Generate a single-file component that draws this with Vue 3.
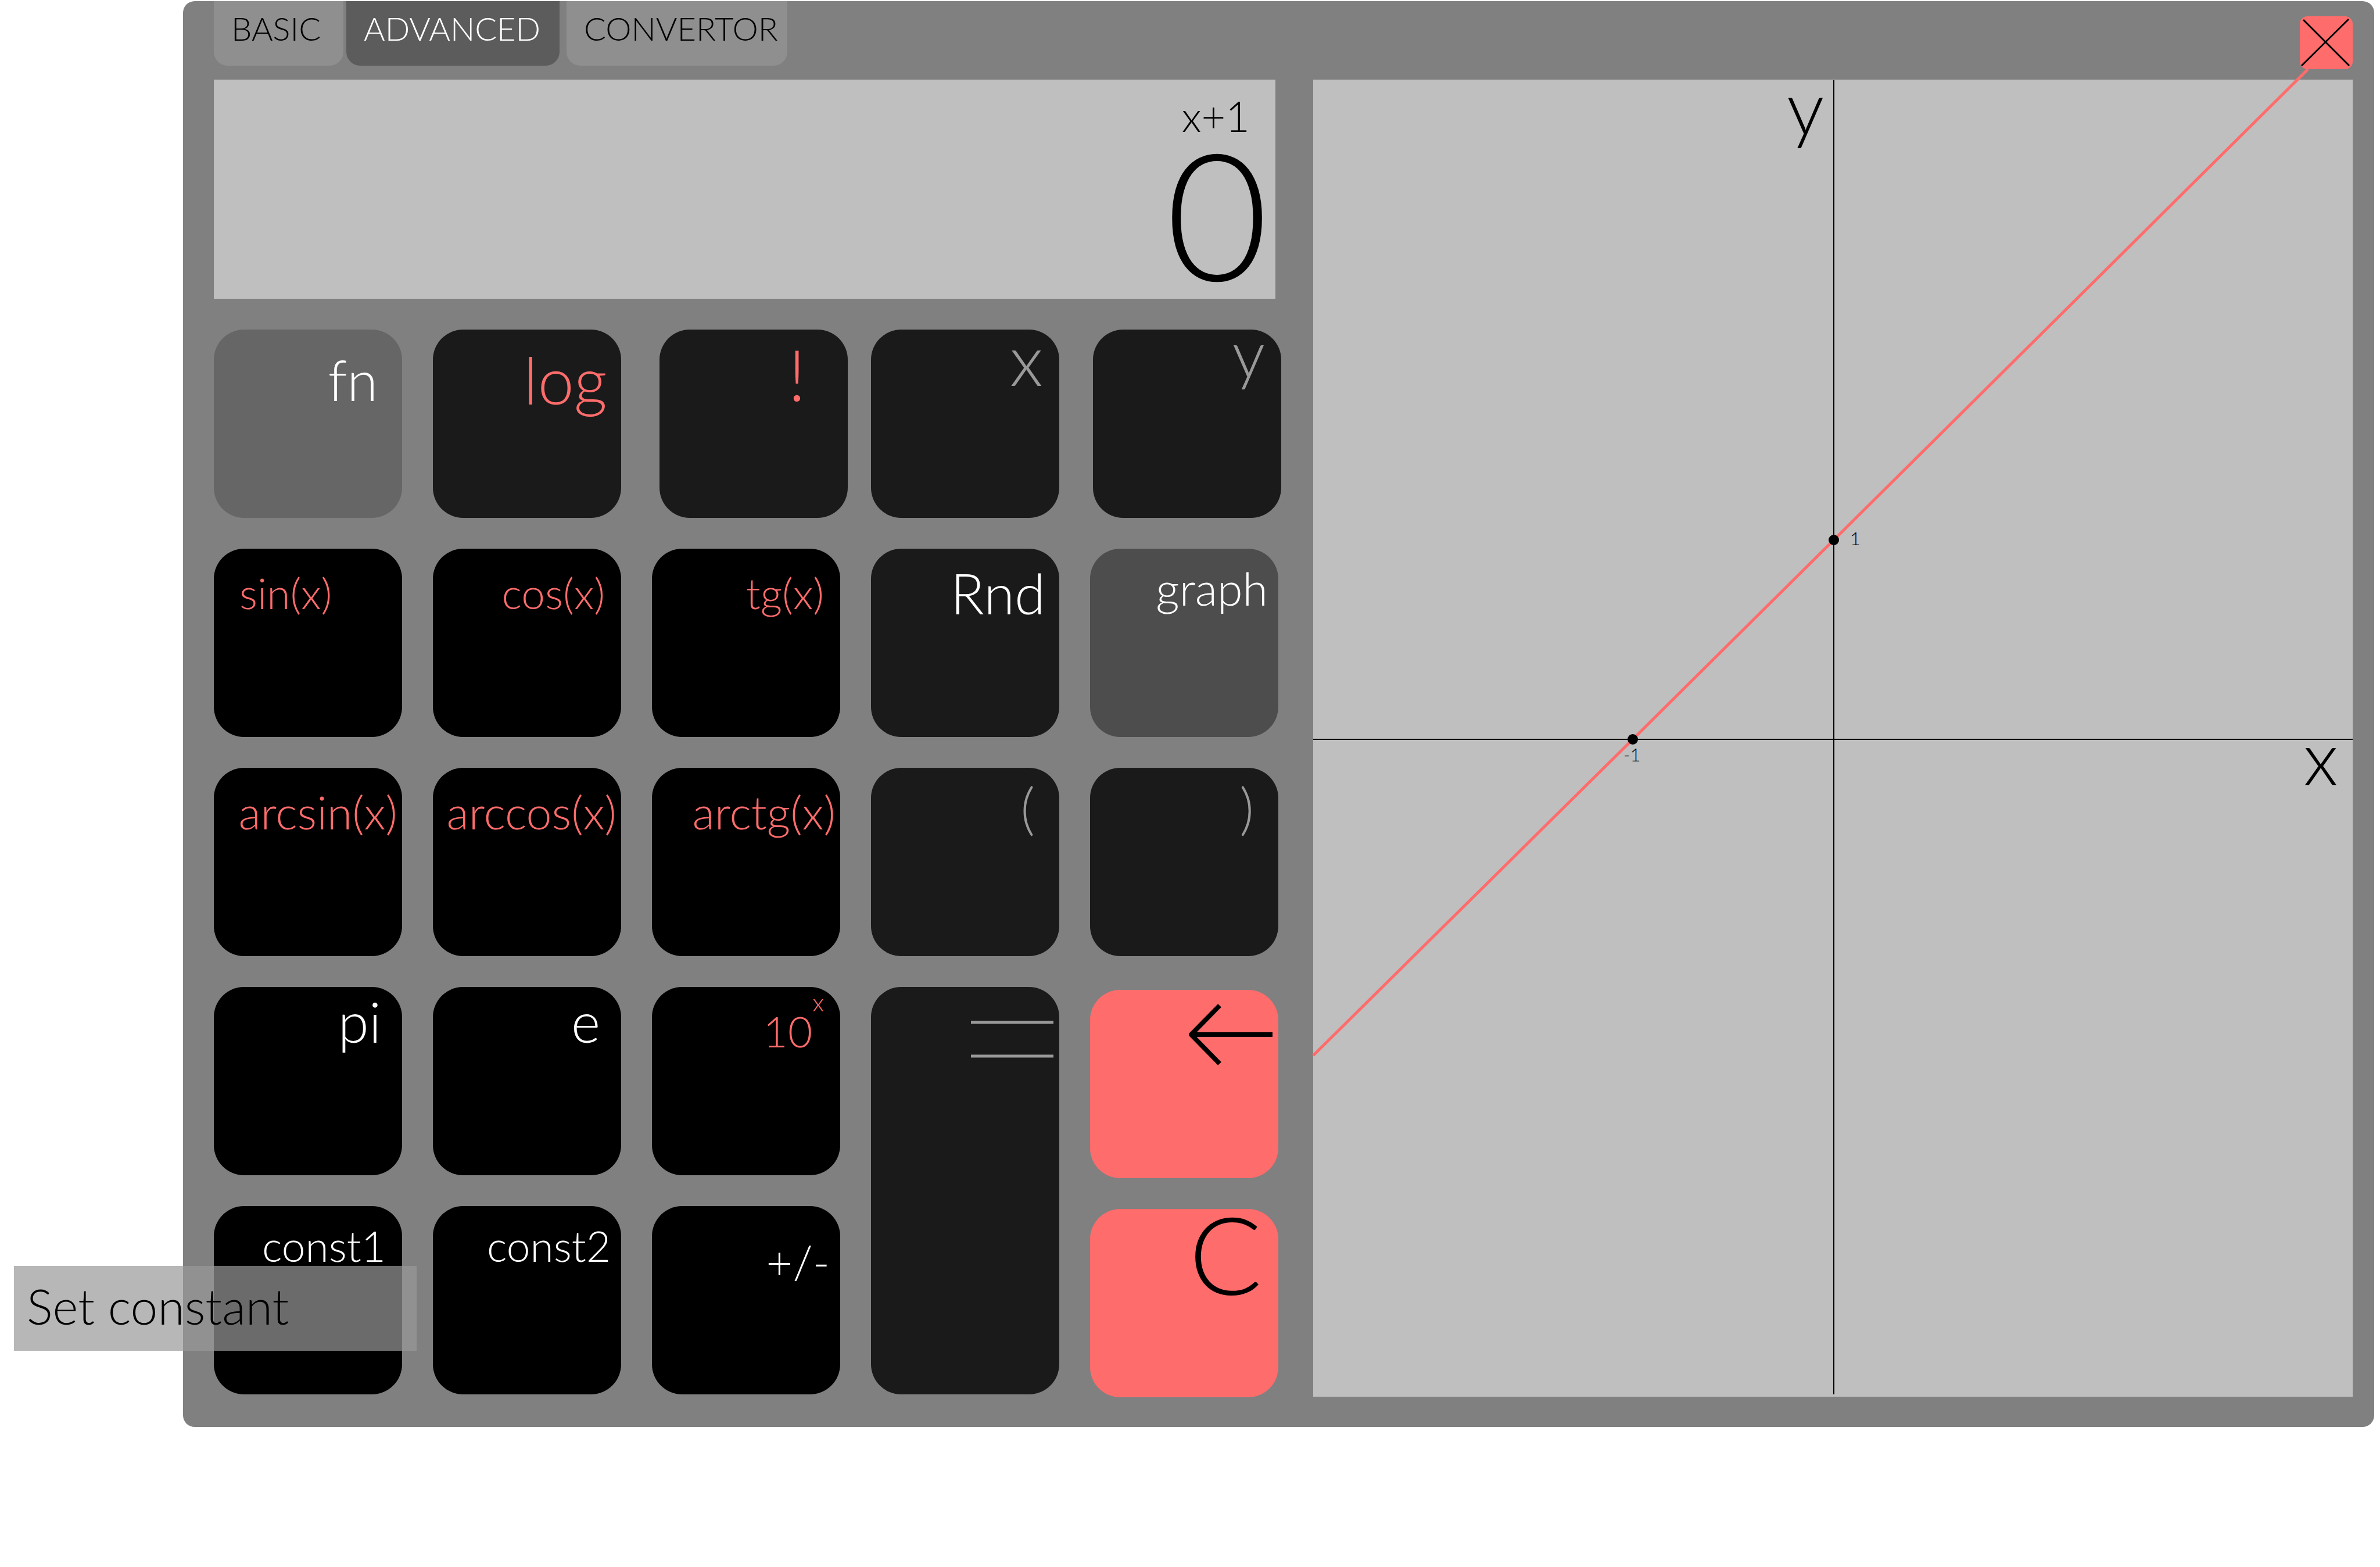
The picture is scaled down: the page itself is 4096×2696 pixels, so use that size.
<script setup>
import { ref } from 'vue'

const tabs = ['BASIC', 'ADVANCED', 'CONVERTOR']
const activeTab = ref('ADVANCED')

const topKeys = [
  { label: 'fn', look: 'function size-l drop-5 inset-42' },
  { label: 'log', look: 'dark accent size-xl drop-5 inset-24' },
  { label: '!', look: 'dark accent size-xxl drop-4 inset-72' },
  { label: 'x', look: 'dark muted size-xxl drop-1 inset-28' },
  { label: 'y', look: 'dark muted size-xl drop-0 inset-28' },
]

const keys = [
  { label: 'sin(x)', look: 'black accent size-s drop-4 from-left' },
  { label: 'cos(x)', look: 'black accent size-s drop-4 inset-28' },
  { label: 'tg(x)', look: 'black accent size-s drop-4 inset-28' },
  { label: 'Rnd', look: 'dark size-l drop-4 inset-24' },
  { label: 'graph', look: 'mode size-m drop-3 inset-18' },
  { label: 'arcsin(x)', look: 'black accent size-m drop-4 inset-8' },
  { label: 'arccos(x)', look: 'black accent size-m drop-4 inset-8' },
  { label: 'arctg(x)', look: 'black accent size-m drop-4 inset-8' },
  { label: '(', look: 'dark muted size-l drop-3 inset-42' },
  { label: ')', look: 'dark muted size-l drop-3 inset-42' },
  { label: 'pi', look: 'black size-l drop-2 inset-36' },
  { label: 'e', look: 'black size-l drop-2 inset-36' },
  { label: '10', power: 'x', look: 'black accent size-s drop-4 inset-28' },
  { label: '=', icon: 'equals', look: 'dark muted tall' },
  { label: 'Backspace', icon: 'back', look: 'red' },
  { label: 'const1', look: 'black size-s drop-3 inset-28' },
  { label: 'const2', look: 'black size-s drop-3 inset-18' },
  { label: '+/-', look: 'black size-m drop-6 inset-18' },
  { label: 'C', look: 'red size-huge drop-4 inset-28' },
]
</script>

<template>
  <main class="page">
    <section class="calculator">
      <header class="header">
        <nav class="tabs">
          <button
            v-for="tab in tabs"
            :key="tab"
            type="button"
            class="tab"
            :class="[tab.toLowerCase(), { active: tab === activeTab }]"
            @click="activeTab = tab"
          >{{ tab }}</button>
        </nav>
        <button type="button" class="close" aria-label="Close">
          <svg viewBox="0 0 91 91" aria-hidden="true">
            <path d="M6 6L85 85M84 5L3 85" fill="none" stroke="#000" stroke-width="3" />
          </svg>
        </button>
      </header>

      <div class="body">
        <div class="controls">
          <output class="display">
            <span class="expression">x+1</span>
            <span class="result">0</span>
          </output>

          <div class="top-row">
            <button v-for="key in topKeys" :key="key.label" type="button" class="key" :class="key.look">{{ key.label }}</button>
          </div>

          <div class="keypad">
            <button
              v-for="key in keys"
              :key="key.label"
              type="button"
              class="key"
              :class="key.look"
              :aria-label="key.icon ? key.label : null"
            >
              <svg v-if="key.icon === 'equals'" class="equals" viewBox="0 0 142 64" aria-hidden="true">
                <path d="M0 3H142M0 61H142" stroke="currentColor" stroke-width="5" />
              </svg>
              <svg v-else-if="key.icon === 'back'" class="back" viewBox="0 0 144 106" aria-hidden="true">
                <path d="M3 53H144M53 3L4 53L53 103" fill="none" stroke="#000" stroke-width="8" />
              </svg>
              <template v-else>{{ key.label }}<sup v-if="key.power">{{ key.power }}</sup></template>
            </button>
          </div>
        </div>

        <figure class="graph">
          <svg viewBox="0 0 1789 2266" role="img" aria-label="Graph of x+1">
            <path d="M896 1V2262M0 1135H1789" stroke="#000" stroke-width="2" />
            <path d="M0 1679L550 1135L896 792L1712 -18" fill="none" stroke="#ff6c6c" stroke-width="5" />
            <circle cx="550" cy="1135" r="9" />
            <circle cx="896" cy="792" r="9" />
            <text class="axis" x="815" y="95">y</text>
            <text class="axis" x="1704" y="1214">x</text>
            <text class="tick" x="924" y="801">1</text>
            <text class="tick" x="534" y="1173">-1</text>
          </svg>
        </figure>
      </div>

      <div class="tooltip" role="tooltip">Set constant</div>
    </section>
  </main>
</template>

<style>
body {
  margin: 0;
  background: #fff;
}
</style>

<style scoped>
.page {
  padding: 2px 10px 0 315px;
  font-family: Lato, "Open Sans", sans-serif;
  font-weight: 300;
  color: #000;
}

.calculator {
  position: relative;
  box-sizing: border-box;
  padding: 0 37px 52px 53px;
  border-radius: 20px;
  background: #808080;
}

button {
  margin: 0;
  padding: 0;
  border: 0;
  font: inherit;
  color: inherit;
  cursor: pointer;
}

.header {
  display: flex;
  justify-content: space-between;
  height: 135px;
}

.tabs {
  display: flex;
  align-items: flex-start;
}

.tab {
  box-sizing: border-box;
  height: 111px;
  padding: 0 0 18px 30px;
  border-radius: 0 0 24px 24px;
  background: #8f8f8f;
  font-size: 56px;
  line-height: 93px;
  text-align: left;
  white-space: nowrap;
}

.tab.basic { width: 223px; }
.tab.convertor { width: 380px; }

.tab.advanced {
  width: 367px;
  margin: 0 12px 0 5px;
}

.tab.active {
  background: #5c5c5c;
  color: #fff;
}

.close {
  width: 91px;
  height: 91px;
  margin-top: 26px;
  border-radius: 13px;
  background: #ff6c6c;
}

.close svg {
  display: block;
}

.body {
  display: grid;
  grid-template-columns: 1832fr 1789fr;
  gap: 60px;
}

.controls {
  display: flex;
  flex-direction: column;
  gap: 53px;
}

.display {
  display: flex;
  flex-direction: column;
  align-items: flex-end;
  box-sizing: border-box;
  height: 377px;
  margin-right: 5px;
  background: #bfbfbf;
}

.expression {
  padding: 22px 44px 0 0;
  font-size: 72px;
  line-height: 80px;
}

.result {
  padding-right: 12px;
  font-size: 305px;
  line-height: 252px;
}

.top-row {
  display: grid;
  grid-template-columns: 377fr 390fr 364fr 382fr 324fr;
  margin-right: -5px;
}

.top-row .key {
  width: 324px;
}

.keypad {
  display: grid;
  grid-template-columns: repeat(5, 1fr);
  grid-auto-rows: 324px;
  gap: 53px;
}

.key {
  display: flex;
  align-items: flex-start;
  justify-content: flex-end;
  box-sizing: border-box;
  height: 324px;
  border-radius: 52px;
  color: #fff;
  line-height: 80px;
  white-space: nowrap;
}

.black { background: #000; }
.dark { background: #1a1a1a; }
.function { background: #666; }
.mode { background: #4d4d4d; }
.accent { color: #ff6c6c; }
.muted { color: #999; }

.red {
  margin-top: 5px;
  background: #ff6c6c;
  color: #000;
}

.tall {
  grid-row: span 2;
  height: auto;
}

.size-s { font-size: 73px; }
.size-m { font-size: 79px; }
.size-l { font-size: 96px; }
.size-xl { font-size: 112px; }
.size-xxl { font-size: 122px; }
.size-huge { font-size: 186px; }

.drop-1 { padding-top: 10px; }
.drop-2 { padding-top: 19px; }
.drop-3 { padding-top: 28px; }
.drop-4 { padding-top: 36px; }
.drop-5 { padding-top: 46px; }
.drop-6 { padding-top: 56px; }

.inset-8 { padding-right: 8px; }
.inset-18 { padding-right: 18px; }
.inset-24 { padding-right: 24px; }
.inset-28 { padding-right: 28px; }
.inset-36 { padding-right: 36px; }
.inset-42 { padding-right: 42px; }
.inset-72 { padding-right: 72px; }

.from-left {
  justify-content: flex-start;
  padding-left: 44px;
}

sup {
  margin-top: -20px;
  font-size: 42px;
  line-height: 20px;
}

.equals {
  width: 142px;
  margin: 58px 10px 0 0;
}

.back {
  width: 144px;
  margin: 24px 10px 0 0;
}

.graph {
  margin: 0;
  background: #bfbfbf;
}

.graph svg {
  display: block;
  width: 100%;
  overflow: visible;
}

.axis { font-size: 128px; }
.tick { font-size: 31px; }

.tooltip {
  position: absolute;
  left: -291px;
  bottom: 131px;
  box-sizing: border-box;
  width: 693px;
  padding: 0 0 8px 22px;
  background: rgba(153, 153, 153, 0.7);
  font-size: 84px;
  line-height: 138px;
}
</style>
